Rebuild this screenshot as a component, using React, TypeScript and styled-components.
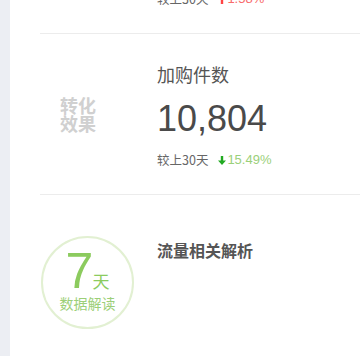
import React from "react";
import styled, { createGlobalStyle } from "styled-components";

const Global = createGlobalStyle`
  html, body { margin: 0; padding: 0; background: #fff; }
  body { font-family: "Liberation Sans", "Noto Sans CJK SC", sans-serif; }
  #root { height: 356px; overflow: hidden; }
`;

const Page = styled.div`
  display: flex;
  height: 356px;
  overflow: hidden;
`;

const Strip = styled.div`
  width: 10px;
  flex: none;
  background: #eceef3;
`;

const Content = styled.div`
  flex: 1;
  display: flex;
  flex-direction: column;
  padding-left: 30px;
`;

const Row = styled.div<{ $offset?: number; $height: number }>`
  display: flex;
  flex: none;
  height: ${(p) => p.$height}px;
  margin-top: ${(p) => p.$offset ?? 0}px;
  border-bottom: 1px solid #ececec;
  box-sizing: border-box;
`;

const Side = styled.div<{ $align: "center" | "start" }>`
  width: 117px;
  flex: none;
  display: flex;
  align-items: ${(p) => (p.$align === "center" ? "center" : "flex-start")};
`;

const GroupLabel = styled.div`
  padding-left: 20px;
  font-family: "Noto Sans CJK SC", sans-serif;
  font-size: 18px;
  font-weight: 700;
  line-height: 18px;
  color: #d0d0d0;
  width: 36px;
`;

const Main = styled.div`
  flex: 1;
  padding-top: 28px;
`;

const Title = styled.div`
  font-family: "Noto Sans CJK SC", sans-serif;
  font-size: 18px;
  line-height: 24px;
  color: #555;
`;

const Value = styled.div`
  margin-top: 11px;
  font-family: "Liberation Sans", sans-serif;
  font-size: 36px;
  line-height: 44px;
  color: #4a4a4a;
`;

const Compare = styled.div`
  margin-top: 10px;
  display: flex;
  align-items: center;
  font-family: "Noto Sans CJK SC", sans-serif;
  font-size: 12.5px;
  line-height: 18px;
  color: #666;
`;

const Trend = styled.span<{ $up: boolean }>`
  display: inline-flex;
  align-items: center;
  margin-left: 10px;
  color: ${(p) => (p.$up ? "#f86b6b" : "#9bd07a")};
  font-family: "Liberation Sans", sans-serif;
  font-size: 13px;
  svg { margin-right: 1px; }
`;

const Circle = styled.div`
  margin-top: 41px;
  margin-left: 1px;
  width: 93px;
  height: 93px;
  box-sizing: border-box;
  padding-top: 8px;
  border: 2px solid #e2f0d2;
  border-radius: 50%;
  display: flex;
  flex-direction: column;
  align-items: center;
  color: #8ccb5e;
`;

const DayLine = styled.div`
  display: flex;
  align-items: baseline;
`;

const DayNum = styled.span`
  font-family: "Liberation Sans", sans-serif;
  font-size: 50px;
  line-height: 50px;
  color: #8ccb5e;
`;

const DayUnit = styled.span`
  font-family: "Noto Sans CJK SC", sans-serif;
  font-size: 17px;
  line-height: 17px;
  margin-left: -1px;
  color: #8ccb5e;
`;

const CircleText = styled.div`
  font-family: "Noto Sans CJK SC", sans-serif;
  font-size: 14px;
  line-height: 15px;
  color: #9ccf78;
`;

const SubTitle = styled.div`
  padding-top: 44px;
  font-family: "Noto Sans CJK SC", sans-serif;
  font-size: 16px;
  font-weight: 700;
  line-height: 22px;
  color: #555;
`;

const Arrow = ({ up }: { up: boolean }) => (
  <svg width="8" height="9" viewBox="0 0 8 9">
    {up ? (
      <path d="M4 0 L8 4.5 L5.2 4.5 L5.2 9 L2.8 9 L2.8 4.5 L0 4.5 Z" fill="#f44" />
    ) : (
      <path d="M4 9 L8 4.5 L5.2 4.5 L5.2 0 L2.8 0 L2.8 4.5 L0 4.5 Z" fill="#22aa22" />
    )}
  </svg>
);

export default function App() {
  return (
    <>
      <Global />
      <Page>
        <Strip />
        <Content>
          <Row $offset={-127} $height={161}>
            <Side $align="center" />
            <Main>
              <Title>访客数</Title>
              <Value>3,216</Value>
              <Compare>
                较上30天
                <Trend $up>
                  <Arrow up />
                  1.58%
                </Trend>
              </Compare>
            </Main>
          </Row>
          <Row $height={161}>
            <Side $align="center">
              <GroupLabel>转化效果</GroupLabel>
            </Side>
            <Main>
              <Title>加购件数</Title>
              <Value>10,804</Value>
              <Compare>
                较上30天
                <Trend $up={false}>
                  <Arrow up={false} />
                  15.49%
                </Trend>
              </Compare>
            </Main>
          </Row>
          <Row $height={200}>
            <Side $align="start">
              <Circle>
                <DayLine>
                  <DayNum>7</DayNum>
                  <DayUnit>天</DayUnit>
                </DayLine>
                <CircleText>数据解读</CircleText>
              </Circle>
            </Side>
            <SubTitle>流量相关解析</SubTitle>
          </Row>
        </Content>
      </Page>
    </>
  );
}
